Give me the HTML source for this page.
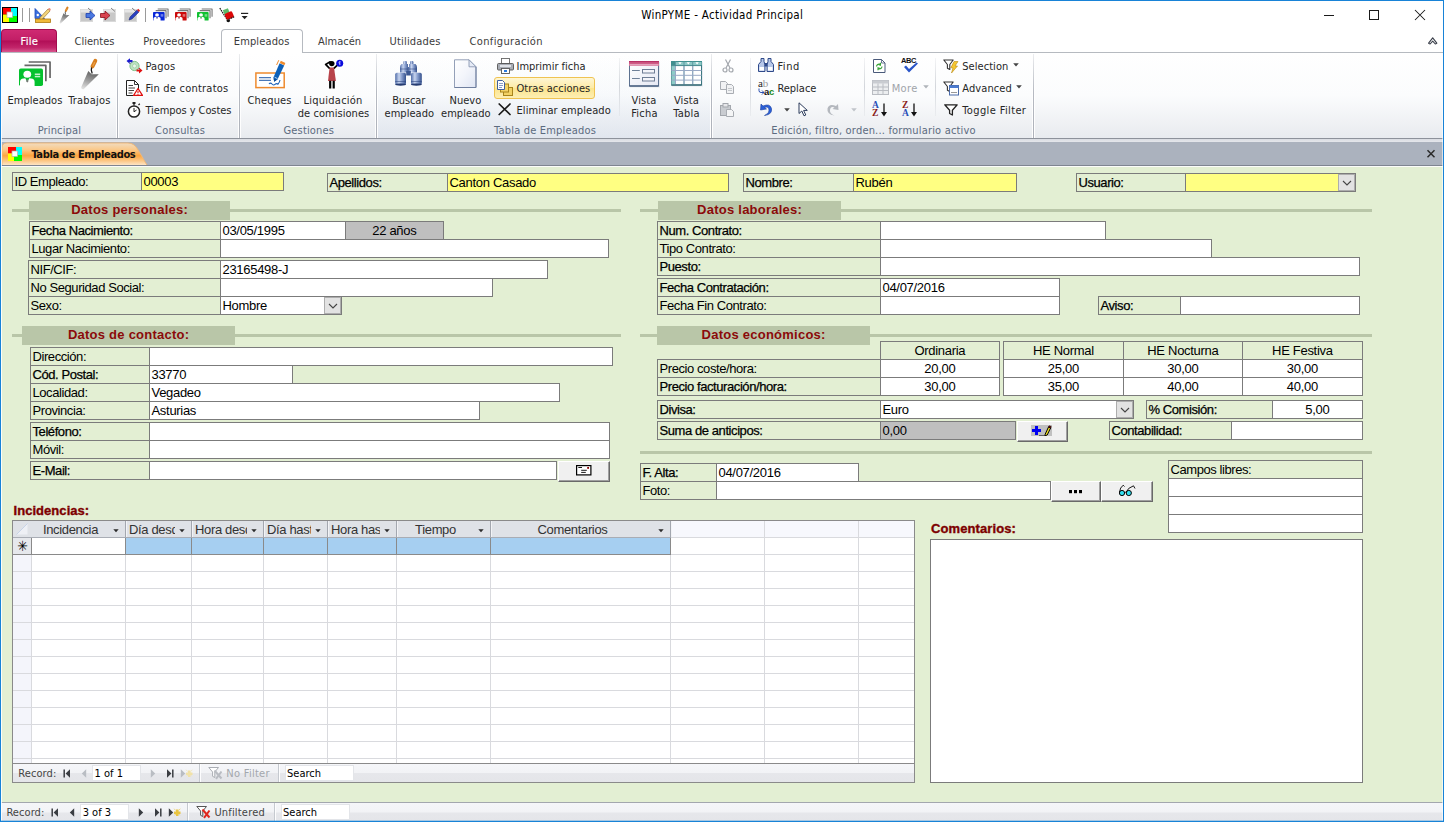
<!DOCTYPE html>
<html lang="es"><head><meta charset="utf-8"><title>WinPYME - Actividad Principal</title>
<style>
html,body{margin:0;padding:0;}
body{width:1444px;height:822px;overflow:hidden;background:#fff;position:relative;font-family:"Liberation Sans", Arial, sans-serif;}
.b{position:absolute;box-sizing:border-box;overflow:hidden;}
.t{position:absolute;white-space:nowrap;}
.a{font-family:"Liberation Sans", Arial, sans-serif;}
.u{font-family:"DejaVu Sans Condensed", "DejaVu Sans", "Liberation Sans", sans-serif;}
</style></head>
<body>
<div class="b" style="left:0px;top:0px;width:1444px;height:30px;background:#ffffff;"></div>
<div class="t u" style="top:6.00px;line-height:18px;font-size:11.5px;color:#000;letter-spacing:0.317px;left:422.16px;width:600px;text-align:center;">WinPYME - Actividad Principal</div>
<svg class="b" style="left:1320px;top:5px;" width="120" height="20" viewBox="0 0 120 20"><path d="M4 10.5H14" stroke="#1a1a1a" stroke-width="1" fill="none"/><rect x="49.5" y="5.5" width="9" height="9" stroke="#1a1a1a" stroke-width="1" fill="none"/><path d="M95 5L105 15M105 5L95 15" stroke="#1a1a1a" stroke-width="1.05" fill="none"/></svg>
<div class="b" style="left:0px;top:30px;width:1444px;height:23px;background:#ffffff;"></div>
<div class="b" style="left:0px;top:52px;width:1444px;height:1px;background:#b6bac0;"></div>
<div class="b" style="left:1px;top:29px;width:56px;height:23px;background:linear-gradient(#cf2a72 0%,#c21e66 45%,#b20e57 50%,#c2256a 80%,#d9578f 100%);border:1px solid #a20c4e;border-bottom:none;border-radius:4px 4px 0 0;"></div>
<div class="t u" style="top:33.00px;line-height:17px;font-size:11px;color:#fff;letter-spacing:0.254px;left:-270.67px;width:600px;text-align:center;-webkit-text-stroke:0.2px #fff;">File</div>
<div class="t u" style="top:33.00px;line-height:17px;font-size:11px;color:#3b3b3b;letter-spacing:0.012px;left:-205.49px;width:600px;text-align:center;">Clientes</div>
<div class="t u" style="top:33.00px;line-height:17px;font-size:11px;color:#3b3b3b;letter-spacing:0.126px;left:-125.64px;width:600px;text-align:center;">Proveedores</div>
<div class="t u" style="top:33.00px;line-height:17px;font-size:11px;color:#3b3b3b;letter-spacing:-0.004px;left:39.50px;width:600px;text-align:center;">Almacén</div>
<div class="t u" style="top:33.00px;line-height:17px;font-size:11px;color:#3b3b3b;letter-spacing:0.173px;left:115.09px;width:600px;text-align:center;">Utilidades</div>
<div class="t u" style="top:33.00px;line-height:17px;font-size:11px;color:#3b3b3b;letter-spacing:0.37px;left:206.19px;width:600px;text-align:center;">Configuración</div>
<div class="b" style="left:221px;top:29px;width:82px;height:25px;background:#ffffff;border:1px solid #b6bac0;border-bottom:none;border-radius:4px 4px 0 0;"></div>
<div class="t u" style="top:33.00px;line-height:17px;font-size:11px;color:#3b3b3b;letter-spacing:0.125px;left:-38.34px;width:600px;text-align:center;">Empleados</div>
<svg class="b" style="left:1426px;top:35px;" width="14" height="12" viewBox="0 0 14 12"><path d="M2.6 8.2L6.7 2.8L10.8 8.2L9.3 9L6.7 6.2L4.1 9Z" stroke="#3a3f4a" stroke-width="1.1" fill="#fff" stroke-linejoin="round"/></svg>
<div class="b" style="left:0px;top:53px;width:1444px;height:85px;background:linear-gradient(#ffffff 0%,#fbfcfd 50%,#eef0f3 85%,#e8ebef 100%);"></div>
<div class="b" style="left:0px;top:138px;width:1444px;height:1px;background:#8d929b;"></div>
<div class="b" style="left:0px;top:139px;width:1444px;height:3px;background:linear-gradient(#d9dce2,#e4e6eb);"></div>
<div class="b" style="left:378px;top:54px;width:332px;height:84px;background:linear-gradient(rgba(215,226,240,0) 0%,rgba(215,226,240,0.08) 40%,rgba(208,219,236,0.3) 100%);"></div>
<div class="b" style="left:116px;top:54px;width:1px;height:84px;background:linear-gradient(rgba(255,255,255,0.3),rgba(255,255,255,0.95) 50%);"></div>
<div class="b" style="left:117px;top:54px;width:1px;height:84px;background:linear-gradient(rgba(180,185,193,0.25),#b6bac2 45%,#adb1b9 100%);"></div>
<div class="b" style="left:118px;top:54px;width:1px;height:84px;background:linear-gradient(rgba(255,255,255,0.3),rgba(255,255,255,0.95) 50%);"></div>
<div class="b" style="left:238px;top:54px;width:1px;height:84px;background:linear-gradient(rgba(255,255,255,0.3),rgba(255,255,255,0.95) 50%);"></div>
<div class="b" style="left:239px;top:54px;width:1px;height:84px;background:linear-gradient(rgba(180,185,193,0.25),#b6bac2 45%,#adb1b9 100%);"></div>
<div class="b" style="left:240px;top:54px;width:1px;height:84px;background:linear-gradient(rgba(255,255,255,0.3),rgba(255,255,255,0.95) 50%);"></div>
<div class="b" style="left:375px;top:54px;width:1px;height:84px;background:linear-gradient(rgba(255,255,255,0.3),rgba(255,255,255,0.95) 50%);"></div>
<div class="b" style="left:376px;top:54px;width:1px;height:84px;background:linear-gradient(rgba(180,185,193,0.25),#b6bac2 45%,#adb1b9 100%);"></div>
<div class="b" style="left:377px;top:54px;width:1px;height:84px;background:linear-gradient(rgba(255,255,255,0.3),rgba(255,255,255,0.95) 50%);"></div>
<div class="b" style="left:710px;top:54px;width:1px;height:84px;background:linear-gradient(rgba(255,255,255,0.3),rgba(255,255,255,0.95) 50%);"></div>
<div class="b" style="left:711px;top:54px;width:1px;height:84px;background:linear-gradient(rgba(180,185,193,0.25),#b6bac2 45%,#adb1b9 100%);"></div>
<div class="b" style="left:712px;top:54px;width:1px;height:84px;background:linear-gradient(rgba(255,255,255,0.3),rgba(255,255,255,0.95) 50%);"></div>
<div class="b" style="left:1032px;top:54px;width:1px;height:84px;background:linear-gradient(rgba(255,255,255,0.3),rgba(255,255,255,0.95) 50%);"></div>
<div class="b" style="left:1033px;top:54px;width:1px;height:84px;background:linear-gradient(rgba(180,185,193,0.25),#b6bac2 45%,#adb1b9 100%);"></div>
<div class="b" style="left:1034px;top:54px;width:1px;height:84px;background:linear-gradient(rgba(255,255,255,0.3),rgba(255,255,255,0.95) 50%);"></div>
<div class="b" style="left:619px;top:58px;width:1px;height:58px;background:linear-gradient(rgba(200,204,210,0.2),#d3d6db 50%,rgba(200,204,210,0.2));"></div>
<div class="b" style="left:750px;top:58px;width:1px;height:58px;background:linear-gradient(rgba(200,204,210,0.2),#d3d6db 50%,rgba(200,204,210,0.2));"></div>
<div class="b" style="left:864px;top:58px;width:1px;height:58px;background:linear-gradient(rgba(200,204,210,0.2),#d3d6db 50%,rgba(200,204,210,0.2));"></div>
<div class="b" style="left:935px;top:58px;width:1px;height:58px;background:linear-gradient(rgba(200,204,210,0.2),#d3d6db 50%,rgba(200,204,210,0.2));"></div>
<div class="t u" style="top:122.00px;line-height:17px;font-size:11px;color:#5c6b80;letter-spacing:0.149px;left:-240.63px;width:600px;text-align:center;">Principal</div>
<div class="t u" style="top:122.00px;line-height:17px;font-size:11px;color:#5c6b80;letter-spacing:0.163px;left:-119.92px;width:600px;text-align:center;">Consultas</div>
<div class="t u" style="top:122.00px;line-height:17px;font-size:11px;color:#5c6b80;letter-spacing:0.153px;left:8.78px;width:600px;text-align:center;">Gestiones</div>
<div class="t u" style="top:122.00px;line-height:17px;font-size:11px;color:#5c6b80;letter-spacing:0.188px;left:245.09px;width:600px;text-align:center;">Tabla de Empleados</div>
<div class="t u" style="top:122.00px;line-height:17px;font-size:11px;color:#5c6b80;letter-spacing:0.187px;left:573.59px;width:600px;text-align:center;">Edición, filtro, orden... formulario activo</div>
<div class="t u" style="top:92.00px;line-height:17px;font-size:11px;color:#262626;letter-spacing:0.025px;left:-265.09px;width:600px;text-align:center;">Empleados</div>
<div class="t u" style="top:92.00px;line-height:17px;font-size:11px;color:#262626;letter-spacing:0.191px;left:-210.60px;width:600px;text-align:center;">Trabajos</div>
<div class="t u" style="top:58.00px;line-height:17px;font-size:11px;color:#262626;letter-spacing:0.194px;left:145.4px;">Pagos</div>
<div class="t u" style="top:80.00px;line-height:17px;font-size:11px;color:#262626;letter-spacing:0.222px;left:145.4px;">Fin de contratos</div>
<div class="t u" style="top:102.00px;line-height:17px;font-size:11px;color:#262626;letter-spacing:-0.067px;left:145.4px;">Tiempos y Costes</div>
<div class="t u" style="top:92.00px;line-height:17px;font-size:11px;color:#262626;letter-spacing:0.129px;left:-30.44px;width:600px;text-align:center;">Cheques</div>
<div class="t u" style="top:92.00px;line-height:17px;font-size:11px;color:#262626;letter-spacing:0.233px;left:33.12px;width:600px;text-align:center;">Liquidación</div>
<div class="t u" style="top:105.00px;line-height:17px;font-size:11px;color:#262626;letter-spacing:0.047px;left:33.52px;width:600px;text-align:center;">de comisiones</div>
<div class="t u" style="top:92.00px;line-height:17px;font-size:11px;color:#262626;letter-spacing:-0.133px;left:108.63px;width:600px;text-align:center;">Buscar</div>
<div class="t u" style="top:105.00px;line-height:17px;font-size:11px;color:#262626;letter-spacing:0.029px;left:109.31px;width:600px;text-align:center;">empleado</div>
<div class="t u" style="top:92.00px;line-height:17px;font-size:11px;color:#262626;letter-spacing:0.062px;left:165.43px;width:600px;text-align:center;">Nuevo</div>
<div class="t u" style="top:105.00px;line-height:17px;font-size:11px;color:#262626;letter-spacing:0.029px;left:165.81px;width:600px;text-align:center;">empleado</div>
<div class="b" style="left:494px;top:77px;width:101px;height:22px;background:linear-gradient(#fef6d4,#fdeba6 50%,#fce48c 51%,#fdefb4);border:1px solid #efc352;border-radius:3px;"></div>
<div class="t u" style="top:58.00px;line-height:17px;font-size:11px;color:#262626;letter-spacing:-0.02px;left:516.5px;">Imprimir ficha</div>
<div class="t u" style="top:80.00px;line-height:17px;font-size:11px;color:#262626;letter-spacing:0.023px;left:516.5px;">Otras acciones</div>
<div class="t u" style="top:102.00px;line-height:17px;font-size:11px;color:#262626;letter-spacing:0.079px;left:516.5px;">Eliminar empleado</div>
<div class="t u" style="top:92.00px;line-height:17px;font-size:11px;color:#262626;letter-spacing:0.125px;left:344.06px;width:600px;text-align:center;">Vista</div>
<div class="t u" style="top:105.00px;line-height:17px;font-size:11px;color:#262626;letter-spacing:0.236px;left:344.52px;width:600px;text-align:center;">Ficha</div>
<div class="t u" style="top:92.00px;line-height:17px;font-size:11px;color:#262626;letter-spacing:0.125px;left:386.46px;width:600px;text-align:center;">Vista</div>
<div class="t u" style="top:105.00px;line-height:17px;font-size:11px;color:#262626;letter-spacing:0.262px;left:386.53px;width:600px;text-align:center;">Tabla</div>
<div class="t u" style="top:58.00px;line-height:17px;font-size:11px;color:#262626;letter-spacing:0.549px;left:777.4px;">Find</div>
<div class="t u" style="top:80.00px;line-height:17px;font-size:11px;color:#262626;letter-spacing:-0.016px;left:777.4px;">Replace</div>
<div class="t u" style="top:80.00px;line-height:17px;font-size:11px;color:#a0a4aa;letter-spacing:0.371px;left:891.7px;">More</div>
<div class="t u" style="top:58.00px;line-height:17px;font-size:11px;color:#262626;letter-spacing:0.042px;left:962.3px;">Selection</div>
<div class="t u" style="top:80.00px;line-height:17px;font-size:11px;color:#262626;letter-spacing:0.078px;left:962.3px;">Advanced</div>
<div class="t u" style="top:102.00px;line-height:17px;font-size:11px;color:#262626;letter-spacing:0.368px;left:962.3px;">Toggle Filter</div>
<svg class="b" style="left:1012.5px;top:63.3px;" width="6" height="4" viewBox="0 0 6 4"><path d="M0.2 0.3H5.8L3 3.6Z" fill="#444"/></svg>
<svg class="b" style="left:1016px;top:85.3px;" width="6" height="4" viewBox="0 0 6 4"><path d="M0.2 0.3H5.8L3 3.6Z" fill="#444"/></svg>
<svg class="b" style="left:923px;top:85.3px;" width="6" height="4" viewBox="0 0 6 4"><path d="M0.2 0.3H5.8L3 3.6Z" fill="#b0b4ba"/></svg>
<svg class="b" style="left:784px;top:107.6px;" width="6" height="4" viewBox="0 0 6 4"><path d="M0.2 0.3H5.8L3 3.6Z" fill="#444"/></svg>
<svg class="b" style="left:851px;top:107.6px;" width="6" height="4" viewBox="0 0 6 4"><path d="M0.2 0.3H5.8L3 3.6Z" fill="#c0c4ca"/></svg>
<svg class="b" style="left:2px;top:7px;" width="16" height="16" viewBox="0 0 16 16"><rect x="0" y="0" width="16" height="16" fill="#000"/><rect x="1.00" y="1.00" width="8.00" height="6.50" fill="#f00" /><rect x="9.00" y="1.00" width="6.00" height="8.00" fill="#0ff" /><rect x="7.00" y="9.00" width="8.00" height="6.00" fill="#0f0" /><rect x="1.00" y="7.50" width="6.00" height="7.50" fill="#ff0" /><rect x="5.00" y="5.00" width="5.50" height="5.50" fill="#fff" stroke="#b0b0b0" stroke-width="0.7"/></svg>
<div class="b" style="left:22px;top:8px;width:1px;height:14px;background:#9a9a9a;"></div>
<div class="b" style="left:29px;top:8px;width:1px;height:14px;background:#9a9a9a;"></div>
<div class="b" style="left:145px;top:8px;width:1px;height:14px;background:#9a9a9a;"></div>
<svg class="b" style="left:34px;top:7px;" width="17" height="16" viewBox="0 0 17 16"><path d="M1 1.5V11.5H10.5Z" fill="#3a6fe0" stroke="#1b48b8" stroke-width="0.8"/><circle cx="3.8" cy="8" r="1.2" fill="#fff"/><path d="M6 10.5L14 2L16 4L8 12.5L5.5 13Z" fill="#f2d37a" stroke="#8a6a20" stroke-width="0.6"/><path d="M14 2L15 1Q16.5 0.8 16.8 2.8L16 4Z" fill="#e98b7a"/><rect x="1.5" y="12" width="15" height="3.5" fill="#f0b93a" stroke="#b07a10" stroke-width="0.8"/></svg>
<svg class="b" style="left:59px;top:6px;" width="11" height="18" viewBox="0 0 20 32"><defs><linearGradient id="tw56" x1="0.6" y1="0" x2="0.3" y2="1"><stop offset="0" stop-color="#5e5e5e"/><stop offset="0.5" stop-color="#9a9a9a"/><stop offset="1" stop-color="#dedede"/></linearGradient></defs><path d="M15.3 2.8L12.5 8.4" stroke="#d9801f" stroke-width="3.9" stroke-linecap="round"/><path d="M14.6 4.5L13 7.5" stroke="#e9a04a" stroke-width="1.2" stroke-linecap="round"/><path d="M11.6 9.5Q10.6 12 12.2 15.5" stroke="#1a1a1a" stroke-width="1.3" fill="none"/><path d="M8.3 13L11.6 16.2L12.8 16.3L18.8 16.2L3.6 31.2Q1.2 31.6 1.2 29.2Z" fill="url(#tw56)"/></svg>
<svg class="b" style="left:80px;top:7px;" width="16" height="16" viewBox="0 0 16 16"><rect x="0.5" y="2.5" width="12" height="12" fill="#c8c8c8" stroke="#d9d9d9"/><rect x="0.5" y="2.5" width="12" height="3" fill="#e6e6e6"/><path d="M8 1L12 4.5" stroke="#666" stroke-width="0.8"/><path d="M6 6.5H10V4L15 8.5L10 13V10.5H6Z" fill="#4a78e0" stroke="#1d3fae" stroke-width="0.8"/></svg>
<svg class="b" style="left:100px;top:7px;" width="16" height="16" viewBox="0 0 16 16"><rect x="3.5" y="2.5" width="12" height="12" fill="#c8c8c8" stroke="#d9d9d9"/><rect x="3.5" y="2.5" width="12" height="3" fill="#e6e6e6"/><path d="M11 1L15 4.5" stroke="#666" stroke-width="0.8"/><path d="M0.5 6.5H5V4L10 8.5L5 13V10.5H0.5Z" fill="#d9434f" stroke="#8a0f1a" stroke-width="0.8"/></svg>
<svg class="b" style="left:124px;top:7px;" width="16" height="16" viewBox="0 0 16 16"><rect x="0.5" y="2.5" width="12" height="12" fill="#c8c8c8" stroke="#d9d9d9"/><rect x="0.5" y="2.5" width="12" height="3" fill="#e6e6e6"/><path d="M8 1L12 4.5" stroke="#666" stroke-width="0.8"/><path d="M5 13L6 10L13 3L15 5L8 12Z" fill="#2a3fc0" stroke="#1a2470" stroke-width="0.5"/><path d="M13 3L14.2 1.8L16 3.6L15 5Z" fill="#e02020"/></svg>
<svg class="b" style="left:153px;top:8px;" width="16" height="14" viewBox="0 0 33 27"><path d="M9.7 1.0H31.05V17" fill="none" stroke="#777" stroke-width="2.3" stroke-linejoin="round"/><path d="M5.5 4.4H26.85V20.2" fill="none" stroke="#777" stroke-width="2.3" stroke-linejoin="round"/><rect x="0" y="7.5" width="24" height="17.6" rx="1.8" fill="#0a28d8"/><ellipse cx="8.3" cy="13.3" rx="3.9" ry="3.5" fill="#fff"/><path d="M1 26.3V20.8Q1 17.8 4.5 17.4L6.3 17.2L8.3 21.3L10.3 17.2L12.1 17.4Q15.6 17.8 15.6 20.8V26.3Z" fill="#fff"/><path d="M7.6 18.5H9L9.4 20.4L8.3 21.6L7.2 20.4Z" fill="#777"/><rect x="15.8" y="12.5" width="5.4" height="1.5" fill="#fff" opacity="0.75"/><rect x="15.8" y="14.8" width="5.4" height="1.5" fill="#fff" opacity="0.75"/></svg>
<svg class="b" style="left:175px;top:8px;" width="16" height="14" viewBox="0 0 33 27"><path d="M9.7 1.0H31.05V17" fill="none" stroke="#777" stroke-width="2.3" stroke-linejoin="round"/><path d="M5.5 4.4H26.85V20.2" fill="none" stroke="#777" stroke-width="2.3" stroke-linejoin="round"/><rect x="0" y="7.5" width="24" height="17.6" rx="1.8" fill="#cc0a0a"/><ellipse cx="8.3" cy="13.3" rx="3.9" ry="3.5" fill="#fff"/><path d="M1 26.3V20.8Q1 17.8 4.5 17.4L6.3 17.2L8.3 21.3L10.3 17.2L12.1 17.4Q15.6 17.8 15.6 20.8V26.3Z" fill="#fff"/><path d="M7.6 18.5H9L9.4 20.4L8.3 21.6L7.2 20.4Z" fill="#777"/><rect x="15.8" y="12.5" width="5.4" height="1.5" fill="#fff" opacity="0.75"/><rect x="15.8" y="14.8" width="5.4" height="1.5" fill="#fff" opacity="0.75"/></svg>
<svg class="b" style="left:197px;top:8px;" width="16" height="14" viewBox="0 0 33 27"><path d="M9.7 1.0H31.05V17" fill="none" stroke="#777" stroke-width="2.3" stroke-linejoin="round"/><path d="M5.5 4.4H26.85V20.2" fill="none" stroke="#777" stroke-width="2.3" stroke-linejoin="round"/><rect x="0" y="7.5" width="24" height="17.6" rx="1.8" fill="#10c030"/><ellipse cx="8.3" cy="13.3" rx="3.9" ry="3.5" fill="#fff"/><path d="M1 26.3V20.8Q1 17.8 4.5 17.4L6.3 17.2L8.3 21.3L10.3 17.2L12.1 17.4Q15.6 17.8 15.6 20.8V26.3Z" fill="#fff"/><path d="M7.6 18.5H9L9.4 20.4L8.3 21.6L7.2 20.4Z" fill="#777"/><rect x="15.8" y="12.5" width="5.4" height="1.5" fill="#fff" opacity="0.75"/><rect x="15.8" y="14.8" width="5.4" height="1.5" fill="#fff" opacity="0.75"/></svg>
<svg class="b" style="left:219px;top:7px;" width="17" height="16" viewBox="0 0 17 16"><path d="M0.8 1.2L8.8 13.5" stroke="#111" stroke-width="1.2" fill="none" stroke-dasharray="1.6 0.7"/><rect x="4.5" y="2.2" width="5.5" height="4.5" fill="#5cba6a" transform="rotate(-22 7 4.5)"/><rect x="6.3" y="5.3" width="8" height="6.6" rx="1.5" fill="#dc0808" transform="rotate(-24 10 8.5)"/><ellipse cx="9.3" cy="13.8" rx="1.8" ry="1.4" fill="#111"/><path d="M9.5 12.6L15.8 9.4" stroke="#111" stroke-width="1.1" stroke-dasharray="1.6 0.8"/></svg>
<svg class="b" style="left:241px;top:12px;" width="8" height="8" viewBox="0 0 8 8"><path d="M0 1.4H7.2" stroke="#222" stroke-width="1.2"/><path d="M0.6 4H6.6L3.6 7.2Z" fill="#222"/></svg>
<svg class="b" style="left:19px;top:60.5px;" width="33" height="27" viewBox="0 0 33 27"><path d="M9.7 1.0H31.05V17" fill="none" stroke="#666" stroke-width="1.7" stroke-linejoin="round"/><path d="M5.5 4.4H26.85V20.2" fill="none" stroke="#666" stroke-width="1.7" stroke-linejoin="round"/><rect x="0" y="7.5" width="24" height="17.6" rx="1.8" fill="#04c12e"/><ellipse cx="8.3" cy="13.3" rx="3.9" ry="3.5" fill="#fff"/><path d="M1 26.3V20.8Q1 17.8 4.5 17.4L6.3 17.2L8.3 21.3L10.3 17.2L12.1 17.4Q15.6 17.8 15.6 20.8V26.3Z" fill="#fff"/><path d="M7.6 18.5H9L9.4 20.4L8.3 21.6L7.2 20.4Z" fill="#777"/><rect x="15.8" y="12.5" width="5.4" height="1.5" fill="#fff" opacity="0.75"/><rect x="15.8" y="14.8" width="5.4" height="1.5" fill="#fff" opacity="0.75"/></svg>
<svg class="b" style="left:80px;top:58px;" width="20" height="32" viewBox="0 0 20 32"><defs><linearGradient id="tw100" x1="0.6" y1="0" x2="0.3" y2="1"><stop offset="0" stop-color="#5e5e5e"/><stop offset="0.5" stop-color="#9a9a9a"/><stop offset="1" stop-color="#dedede"/></linearGradient></defs><path d="M15.3 2.8L12.5 8.4" stroke="#d9801f" stroke-width="3.9" stroke-linecap="round"/><path d="M14.6 4.5L13 7.5" stroke="#e9a04a" stroke-width="1.2" stroke-linecap="round"/><path d="M11.6 9.5Q10.6 12 12.2 15.5" stroke="#1a1a1a" stroke-width="1.3" fill="none"/><path d="M8.3 13L11.6 16.2L12.8 16.3L18.8 16.2L3.6 31.2Q1.2 31.6 1.2 29.2Z" fill="url(#tw100)"/></svg>
<svg class="b" style="left:126px;top:58px;" width="17" height="16" viewBox="0 0 17 16"><circle cx="8.5" cy="8" r="4.6" fill="#bfe3c2" stroke="#7fc089" stroke-width="1"/><circle cx="8.5" cy="8" r="2" fill="#e8f5e9" stroke="#8fc898" stroke-width="0.6"/><path d="M0.5 3L4 0.2V2H6.5V4.2H4V6Z" fill="#1a1ad0"/><path d="M16.5 12.5L13 15.5V13.6H10.5V11.4H13V9.6Z" fill="#e01010"/><path d="M3 4L5 6M14 12L12 10" stroke="#888" stroke-width="0.8"/></svg>
<svg class="b" style="left:126px;top:80px;" width="17" height="16" viewBox="0 0 17 16"><path d="M0.5 0.5H8.5L12.5 4.5V15.5H0.5Z" fill="#fff" stroke="#222" stroke-width="1"/><path d="M8.5 0.5V4.5H12.5" fill="none" stroke="#222" stroke-width="0.9"/><path d="M2.5 5.5H7M2.5 8H9M2.5 10.5H8M2.5 13H6.5" stroke="#444" stroke-width="1"/><path d="M12 8.5L16.5 15.5H7.5Z" fill="#fff" stroke="#e01010" stroke-width="1.3" stroke-linejoin="round"/><path d="M12 11V13.2M12 14V14.8" stroke="#e01010" stroke-width="1.1"/></svg>
<svg class="b" style="left:127px;top:102px;" width="15" height="16" viewBox="0 0 15 16"><rect x="5.5" y="0" width="3" height="2" fill="#222"/><path d="M7 2V3.5M11.5 3L12.8 1.8" stroke="#222" stroke-width="1.3"/><circle cx="7" cy="9.5" r="5.6" fill="#fff" stroke="#222" stroke-width="1.5"/><path d="M7 6V9.8L9.6 8" stroke="#222" stroke-width="1" fill="none"/></svg>
<svg class="b" style="left:254px;top:59px;" width="33" height="30" viewBox="0 0 33 30"><rect x="1.9" y="14" width="28.3" height="14.6" fill="#fff" stroke="#ee8a2e" stroke-width="1.5"/><path d="M5 18.6H17M5 21.4H17" stroke="#4a78b8" stroke-width="1.3"/><path d="M15 25Q16.5 23.2 18 25T21 25.4T24 25.2Q25.6 23.5 26 21" stroke="#1f62b8" stroke-width="1.1" fill="none"/><path d="M25.6 4.2L30.2 6.4L23.6 20.3L20.2 22.8L19.4 18.4Z" fill="#0c60b8"/><path d="M19.6 19.5L20.2 22.8L23 20.8Z" fill="#0a4a98"/><path d="M20.6 18.2L23.4 19.6" stroke="#fff" stroke-width="0.7"/><path d="M26.8 1.8L31.4 4L30.4 6.2L25.8 4Z" fill="#f08a2a"/><path d="M24.8 1.2L22.6 6" stroke="#f08a2a" stroke-width="1"/></svg>
<svg class="b" style="left:323px;top:59px;" width="22" height="30" viewBox="0 0 22 30"><circle cx="8.8" cy="4.6" r="2.7" fill="#000"/><path d="M6.3 9.2L2.6 5.4L7.2 2.8" stroke="#000" stroke-width="1.7" fill="none" stroke-linejoin="round" stroke-linecap="round"/><path d="M11.2 9.2L14.6 5.8" stroke="#000" stroke-width="1.7" stroke-linecap="round"/><path d="M6.6 8.4H11L12.9 21.9H5Z" fill="#b8434a"/><path d="M7.2 21.8V29.4M10.7 21.8V29.4" stroke="#000" stroke-width="2.2"/><circle cx="16.7" cy="4.2" r="3.5" fill="#0a0adc"/><path d="M16.7 2.2V6.2M17.7 2.9Q16 2.4 15.9 3.6T17.6 5.2" stroke="#c8ccff" stroke-width="0.7" fill="none"/></svg>
<svg class="b" style="left:394px;top:60px;" width="30" height="26" viewBox="0 0 30 26"><defs><linearGradient id="bn" x1="0" y1="0" x2="1" y2="0"><stop offset="0" stop-color="#4f6ca8"/><stop offset="0.35" stop-color="#c6d3ee"/><stop offset="0.6" stop-color="#8aa0cf"/><stop offset="1" stop-color="#34508c"/></linearGradient></defs><rect x="9.4" y="1" width="3.4" height="3.4" rx="1" fill="url(#bn)"/><rect x="16" y="1" width="3.4" height="3.4" rx="1" fill="url(#bn)"/><path d="M7.5 4H14V7H14.8V12.5H6V7.5Q6 5 7.5 4Z" fill="url(#bn)"/><path d="M15 4H21.5Q23 5 23 7.5V12.5H14.5V7H15Z" fill="url(#bn)"/><rect x="12.2" y="11" width="4.6" height="4.5" fill="#3d5892"/><rect x="1.2" y="12.8" width="10.8" height="11.8" rx="1.6" fill="url(#bn)"/><rect x="17" y="12.8" width="10.8" height="11.8" rx="1.6" fill="url(#bn)"/><path d="M1.2 21.5H12M17 21.5H27.8M6 9H14.5M15 9H23" stroke="#2c4580" stroke-width="0.8" opacity="0.7"/><ellipse cx="6.6" cy="24.6" rx="5.4" ry="1.1" fill="#263c72"/><ellipse cx="22.4" cy="24.6" rx="5.4" ry="1.1" fill="#263c72"/></svg>
<svg class="b" style="left:454px;top:59px;" width="23" height="30" viewBox="0 0 23 30"><defs><linearGradient id="pg" x1="0" y1="0" x2="1" y2="1"><stop offset="0" stop-color="#ffffff"/><stop offset="0.5" stop-color="#f3f5fb"/><stop offset="1" stop-color="#dfe5f3"/></linearGradient></defs><path d="M0.5 0.8H15L22 7.8V28.5H0.5Z" fill="url(#pg)" stroke="#94a0b8" stroke-width="1"/><path d="M15 0.8V7.8H22Z" fill="#e6ebf6" stroke="#8a97b2" stroke-width="0.9" stroke-linejoin="round"/><path d="M0.5 28.5H22V8" fill="none" stroke="#6f7f9f" stroke-width="1"/></svg>
<svg class="b" style="left:497px;top:58px;" width="17" height="16" viewBox="0 0 17 16"><rect x="4.5" y="0.5" width="8" height="5" fill="#fff" stroke="#666" stroke-width="0.9"/><rect x="0.5" y="5.5" width="16" height="6.5" rx="1" fill="#a9adb5" stroke="#555" stroke-width="0.9"/><rect x="3" y="7" width="11" height="2" fill="#dfe2e7"/><rect x="4.5" y="10.5" width="8" height="5" fill="#fff" stroke="#555" stroke-width="0.9"/><rect x="7" y="12" width="3" height="2" fill="#2a7be0"/></svg>
<svg class="b" style="left:497px;top:80px;" width="17" height="16" viewBox="0 0 17 16"><rect x="6.5" y="7.5" width="9" height="8" fill="#f3d264" stroke="#a8841c" stroke-width="1"/><rect x="3.5" y="4" width="8" height="8" fill="#f3d264" stroke="#a8841c" stroke-width="1"/><path d="M0.5 0.5H5.5L7.5 2.5V9.5H0.5Z" fill="#fff" stroke="#3f5f9f" stroke-width="1"/><path d="M2 3.5H6M2 5.5H6M2 7.5H5" stroke="#6a84b8" stroke-width="0.8"/></svg>
<svg class="b" style="left:498px;top:103px;" width="14" height="13" viewBox="0 0 14 13"><path d="M1.2 1L12 11.5M12 1L1.2 11.5" stroke="#1a1a1a" stroke-width="1.7" stroke-linecap="round"/></svg>
<svg class="b" style="left:628px;top:60px;" width="33" height="28" viewBox="0 0 33 28"><defs><linearGradient id="vf" x1="0" y1="0" x2="1" y2="1"><stop offset="0" stop-color="#ffffff"/><stop offset="1" stop-color="#e6e8f4"/></linearGradient></defs><rect x="2" y="2" width="30" height="25.5" fill="#dfe2ea" opacity="0.7"/><rect x="1.5" y="1.5" width="29" height="24.5" fill="url(#vf)" stroke="#5d7290" stroke-width="1"/><rect x="1" y="1" width="30" height="4.8" fill="#cf5c86"/><rect x="1" y="1" width="30" height="1.2" fill="#b83065"/><rect x="1.5" y="4" width="29" height="1.6" fill="#e3a3bb"/><path d="M4 10.5H11.8M4 18.5H11.8" stroke="#6f8098" stroke-width="1"/><rect x="14.5" y="9.5" width="12" height="3.5" fill="#f4f4fa" stroke="#6f7d95"/><rect x="14.5" y="17.5" width="12" height="3.5" fill="#f4f4fa" stroke="#6f7d95"/><path d="M1.5 26H30.5" stroke="#3f5678" stroke-width="1.2"/></svg>
<svg class="b" style="left:670px;top:60px;" width="34" height="28" viewBox="0 0 34 28"><rect x="2" y="2" width="31" height="24.5" fill="#dfe2ea" opacity="0.7"/><rect x="1.5" y="1.5" width="30" height="23.5" fill="#fff" stroke="#3a7780" stroke-width="1"/><rect x="1" y="1" width="31" height="4.6" fill="#3f8f8f"/><rect x="5.5" y="2" width="26" height="3" fill="#8cc8c6"/><rect x="1.5" y="5.5" width="4" height="19.5" fill="#8ecbc8"/><path d="M5.5 1.5V25M14 1.5V25M22.7 1.5V25" stroke="#5f9aa2" stroke-width="1"/><path d="M5.5 5.6V25M14 5.6V25M22.7 5.6V25M1.5 10.5H31.5M1.5 15.3H31.5M1.5 20.1H31.5" stroke="#9aa9c6" stroke-width="1"/><path d="M8.3 2.3H11.7L10 4.6Z M16.6 2.3H20L18.3 4.6Z M25.4 2.3H28.8L27.1 4.6Z" fill="#fff"/><path d="M1.5 5.6H31.5" stroke="#3a7f84" stroke-width="0.8"/><path d="M1.5 25H31.5" stroke="#2f6470" stroke-width="1.2"/></svg>
<svg class="b" style="left:722px;top:59px;" width="12" height="14" viewBox="0 0 12 14"><path d="M3.5 0.5L8 9M8.5 0.5L4 9" stroke="#a3a7ad" stroke-width="1.2" fill="none"/><circle cx="3" cy="11" r="2" fill="none" stroke="#a3a7ad" stroke-width="1.2"/><circle cx="9" cy="11" r="2" fill="none" stroke="#a3a7ad" stroke-width="1.2"/></svg>
<svg class="b" style="left:720px;top:81px;" width="15" height="13" viewBox="0 0 15 13"><path d="M0.5 0.5H5.5L7.5 2.5V8.5H0.5Z" fill="#f1f2f4" stroke="#a9adb3"/><path d="M6.5 3.5H11.5L13.5 5.5V12.5H6.5Z" fill="#f1f2f4" stroke="#a9adb3"/><path d="M8 7.5H12M8 9.5H12" stroke="#b9bcc2" stroke-width="0.8"/></svg>
<svg class="b" style="left:720px;top:103px;" width="15" height="14" viewBox="0 0 15 14"><rect x="0.5" y="2.5" width="10" height="10" fill="#c9ccd1" stroke="#a3a7ad"/><rect x="3" y="0.5" width="5" height="3.5" fill="#e6e7ea" stroke="#a3a7ad"/><path d="M6.5 6.5H11.5L13.5 8.5V13.5H6.5Z" fill="#f4f5f6" stroke="#a9adb3"/></svg>
<svg class="b" style="left:758px;top:58px;" width="16" height="14" viewBox="0 0 16 14"><path d="M3 0.5H6V3.5L7 6.5V13.5H0.5V6.5L3 3.5Z" fill="#b7c7e8" stroke="#2f4a8a" stroke-width="1"/><path d="M10 0.5H13V3.5L15.5 6.5V13.5H9V6.5L10 3.5Z" fill="#b7c7e8" stroke="#2f4a8a" stroke-width="1"/><rect x="6.5" y="5" width="3" height="3.5" fill="#2f4a8a"/><rect x="1.5" y="9" width="4.5" height="3.5" fill="#fff"/><rect x="10" y="9" width="4.5" height="3.5" fill="#fff"/></svg>
<div class="t" style="left:758px;top:79px;font-family:'Liberation Serif',serif;font-size:11px;line-height:9px;color:#222;letter-spacing:-0.2px;">a<span style="color:#9a9a9a">b</span></div>
<div class="t a" style="left:764px;top:87px;font-size:9.5px;line-height:9px;color:#111;font-weight:bold;letter-spacing:-0.3px;">a<span style="color:#1a8a1a">c</span></div>
<svg class="b" style="left:758px;top:88px;" width="7" height="7" viewBox="0 0 7 7"><path d="M1 0.5V2.5Q1 4.5 3 4.5H6M4 2.5L6 4.5L4 6.5" stroke="#2a4fb0" stroke-width="1" fill="none"/></svg>
<svg class="b" style="left:759px;top:103px;" width="14" height="14" viewBox="0 0 14 14"><path d="M2 1L1.5 7L7.5 6L5.5 4.5Q9.5 3 10 7Q10.5 10.5 5.5 12.5Q13.5 11.5 12.5 5.5Q11 0 4 3Z" fill="#2a5fd8" stroke="#1b3fa0" stroke-width="0.6"/></svg>
<svg class="b" style="left:798px;top:102px;" width="11" height="15" viewBox="0 0 11 15"><path d="M1 0.8V11.5L3.8 9L6 13.8L7.8 13L5.6 8.4H9.3Z" fill="#fff" stroke="#2a3a5a" stroke-width="1" stroke-linejoin="round"/></svg>
<svg class="b" style="left:826px;top:103px;" width="14" height="14" viewBox="0 0 14 14"><path d="M12 1L12.5 7L6.5 6L8.5 4.5Q4.5 3 4 7Q3.5 10.5 8.5 12.5Q0.5 11.5 1.5 5.5Q3 0 10 3Z" fill="#b4b8be"/></svg>
<svg class="b" style="left:873px;top:59px;" width="13" height="14" viewBox="0 0 13 14"><path d="M0.5 0.5H8.5L12 4V13.5H0.5Z" fill="#fff" stroke="#4a5a7a" stroke-width="1"/><path d="M8.5 0.5V4H12" fill="none" stroke="#4a5a7a" stroke-width="0.8"/><path d="M3.5 7.5Q4 4.5 7 5.2M7.5 3.8L7.4 6.2L5.4 5.5M9 7.5Q8.5 10.5 5.5 9.8M5 11.2L5.1 8.8L7.1 9.5" stroke="#3aa53a" stroke-width="1.2" fill="none"/></svg>
<div class="t a" style="left:901px;top:57px;font-size:7.5px;line-height:8px;color:#111;font-weight:bold;letter-spacing:-0.4px;">ABC</div>
<svg class="b" style="left:903px;top:62px;" width="16" height="11" viewBox="0 0 16 11"><path d="M1 5L3 3.5L6 7L13.5 0.5L15 1.5L6 10.5Z" fill="#2a55c8"/></svg>
<svg class="b" style="left:872px;top:80px;" width="17" height="15" viewBox="0 0 17 15"><rect x="0.5" y="0.5" width="16" height="14" fill="#eceef0" stroke="#b9bcc2"/><rect x="0.5" y="0.5" width="16" height="3" fill="#c9ccd1"/><path d="M0.5 7H16.5M0.5 10.5H16.5M6 3.5V14.5M11 3.5V14.5" stroke="#b9bcc2" stroke-width="1"/></svg>
<div class="t" style="left:872px;top:101px;font-family:'Liberation Serif',serif;font-size:9.5px;line-height:8px;font-weight:bold;color:#2a4fb8;">A</div>
<div class="t" style="left:872px;top:109px;font-family:'Liberation Serif',serif;font-size:9.5px;line-height:8px;font-weight:bold;color:#8a1a1a;">Z</div>
<svg class="b" style="left:880px;top:103px;" width="8" height="14" viewBox="0 0 8 14"><path d="M4 0.5V11" stroke="#111" stroke-width="1.3"/><path d="M1 9L4 13.5L7 9Z" fill="#111"/></svg>
<div class="t" style="left:902px;top:101px;font-family:'Liberation Serif',serif;font-size:9.5px;line-height:8px;font-weight:bold;color:#8a1a1a;">Z</div>
<div class="t" style="left:902px;top:109px;font-family:'Liberation Serif',serif;font-size:9.5px;line-height:8px;font-weight:bold;color:#2a4fb8;">A</div>
<svg class="b" style="left:910px;top:103px;" width="8" height="14" viewBox="0 0 8 14"><path d="M4 0.5V11" stroke="#111" stroke-width="1.3"/><path d="M1 9L4 13.5L7 9Z" fill="#111"/></svg>
<svg class="b" style="left:943px;top:59px;" width="16" height="15" viewBox="0 0 16 15"><path d="M0.8 1H10.2L6.8 5.5V10.5L4.4 9.2V5.5Z" fill="#fff" stroke="#333" stroke-width="1.1" stroke-linejoin="round"/><path d="M11 2.5H15L12 7H14.5L8.5 14L10 8.8H7.8Z" fill="#f6c731" stroke="#b88a12" stroke-width="0.6"/></svg>
<svg class="b" style="left:943px;top:81px;" width="16" height="15" viewBox="0 0 16 15"><path d="M0.8 1H10.2L6.8 5.5V10.5L4.4 9.2V5.5Z" fill="#fff" stroke="#333" stroke-width="1.1" stroke-linejoin="round"/><rect x="6.5" y="4.5" width="9" height="9.5" fill="#fff" stroke="#4a6aa8" stroke-width="1"/><rect x="6.5" y="4.5" width="9" height="2.5" fill="#4a7ad0"/><path d="M8.5 11.5H13.5" stroke="#333" stroke-width="1" stroke-dasharray="1 1"/></svg>
<svg class="b" style="left:944px;top:104px;" width="15" height="12" viewBox="0 0 15 12"><path d="M0.8 0.8H13.2L8.4 6.2V11L5.6 9.5V6.2Z" fill="#fff" stroke="#222" stroke-width="1.3" stroke-linejoin="round"/></svg>
<div class="b" style="left:0px;top:142px;width:1444px;height:24px;background:#abb2be;"></div>
<svg class="b" style="left:1px;top:142px;" width="150" height="24" viewBox="0 0 150 24"><defs><linearGradient id="tg" x1="0" y1="0" x2="0" y2="1"><stop offset="0" stop-color="#f1dcc0"/><stop offset="0.3" stop-color="#fbc888"/><stop offset="0.55" stop-color="#fda53e"/><stop offset="0.78" stop-color="#fcc888"/><stop offset="1" stop-color="#fdecd4"/></linearGradient></defs><path d="M1 24V6Q1 1 6 1H127Q133 1 136.5 7L146.5 24Z" fill="url(#tg)" stroke="#f0b878" stroke-width="1"/></svg>
<div class="t u" style="top:146.00px;line-height:17px;font-size:11px;color:#111;font-weight:bold;letter-spacing:-0.365px;left:31.4px;">Tabla de Empleados</div>
<svg class="b" style="left:8px;top:147px;" width="14" height="14" viewBox="0 0 14 14"><rect x="0.00" y="0.00" width="8.00" height="6.50" fill="#f00" /><rect x="8.00" y="0.00" width="6.00" height="8.00" fill="#0ff" /><rect x="6.00" y="8.00" width="8.00" height="6.00" fill="#0f0" /><rect x="0.00" y="6.50" width="6.00" height="7.50" fill="#ff0" /><rect x="4.00" y="4.00" width="5.50" height="5.50" fill="#fff" stroke="#b0b0b0" stroke-width="0.7"/></svg>
<svg class="b" style="left:1425px;top:148px;" width="12" height="12" viewBox="0 0 12 12"><path d="M2.5 2.2L9.5 9.2M9.5 2.2L2.5 9.2" stroke="#2a2a2a" stroke-width="1.5"/></svg>
<div class="b" style="left:0px;top:165px;width:1444px;height:1px;background:#7f8591;"></div>
<div class="b" style="left:0px;top:166px;width:1444px;height:1px;background:#fbfcfa;"></div>
<div class="b" style="left:0px;top:167px;width:1444px;height:635px;background:#e3efd3;"></div>
<div class="b" style="left:0px;top:802px;width:1444px;height:1px;background:#a3a7ae;"></div>
<div class="b" style="left:0px;top:803px;width:1444px;height:19px;background:linear-gradient(#f5f6f9 0%,#f2f3f6 48%,#e6e7eb 52%,#e4e5e9 100%);"></div>
<div class="t u" style="top:804.00px;line-height:17px;font-size:11px;color:#444;letter-spacing:0.076px;left:6.4px;">Record:</div>
<svg class="b" style="left:51.4px;top:807.5px;" width="8" height="9" viewBox="0 0 8 9"><path d="M1.2 0.5V8.5" stroke="#3a3d42" stroke-width="1.5"/><path d="M7 0.3L2.6 4.5L7 8.7Z" fill="#3a3d42"/></svg>
<svg class="b" style="left:69.4px;top:807.5px;" width="6" height="9" viewBox="0 0 6 9"><path d="M5.2 0.3L0.8 4.5L5.2 8.7Z" fill="#3a3d42"/></svg>
<div class="b" style="left:80px;top:804px;width:49px;height:16px;background:#fff;border:1px solid #e3e5e9;"></div>
<div class="t u" style="top:804.00px;line-height:17px;font-size:11px;color:#000;left:82.7px;">3 of 3</div>
<svg class="b" style="left:138.4px;top:807.5px;" width="6" height="9" viewBox="0 0 6 9"><path d="M0.8 0.3L5.2 4.5L0.8 8.7Z" fill="#3a3d42"/></svg>
<svg class="b" style="left:154.4px;top:807.5px;" width="8" height="9" viewBox="0 0 8 9"><path d="M1 0.3L5.4 4.5L1 8.7Z" fill="#3a3d42"/><path d="M6.8 0.5V8.5" stroke="#3a3d42" stroke-width="1.5"/></svg>
<svg class="b" style="left:168.4px;top:807.5px;" width="13" height="9" viewBox="0 0 13 9"><path d="M0.8 0.3L5.2 4.5L0.8 8.7Z" fill="#3a3d42"/><path d="M6 3.5h2v-2h2.5v2h2v2.5h-2v2h-2.5v-2h-2z" fill="#e9c440"/><path d="M6.2 0.8L12.2 7.8M12.2 0.8L6.2 7.8" stroke="#e9c440" stroke-width="0.9" stroke-dasharray="1.2 1.2"/></svg>
<div class="b" style="left:187px;top:803px;width:1px;height:18px;background:#c5c9cf;"></div>
<div class="b" style="left:188px;top:803px;width:1px;height:18px;background:#fdfdfe;"></div>
<svg class="b" style="left:196px;top:805px;" width="16" height="14" viewBox="0 0 16 14"><path d="M0.8 1.5H10.5L6.8 6V11.5L4.6 10.3V6Z" fill="#fff" stroke="#555" stroke-width="1"/><path d="M6.5 4.5L13.5 12.5M13.5 5.5L8 12.8" stroke="#e0281e" stroke-width="2"/></svg>
<div class="t u" style="top:804.00px;line-height:17px;font-size:11px;color:#444;letter-spacing:0.181px;left:214.4px;">Unfiltered</div>
<div class="b" style="left:274px;top:803px;width:1px;height:18px;background:#c5c9cf;"></div>
<div class="b" style="left:275px;top:803px;width:1px;height:18px;background:#fdfdfe;"></div>
<div class="b" style="left:281px;top:804px;width:69px;height:16px;background:#fff;border:1px solid #e3e5e9;"></div>
<div class="t u" style="top:804.00px;line-height:17px;font-size:11px;color:#000;left:283px;">Search</div>
<div class="b" style="left:12px;top:172px;width:130px;height:19px;border:1px solid #7b7b7b;"></div>
<div class="t a" style="top:172.00px;line-height:19px;font-size:13px;color:#000;letter-spacing:-0.42px;left:14.5px;">ID Empleado:</div>
<div class="b" style="left:141px;top:172px;width:143px;height:19px;background:#ffff82;border:1px solid #7b7b7b;"></div>
<div class="t a" style="top:172.00px;line-height:19px;font-size:13px;color:#000;letter-spacing:-0.3px;left:143.5px;">00003</div>
<div class="b" style="left:327px;top:173px;width:121px;height:19px;border:1px solid #7b7b7b;"></div>
<div class="t a" style="top:173.00px;line-height:19px;font-size:13px;color:#000;letter-spacing:-0.42px;left:329.5px;-webkit-text-stroke:0.25px #000;">Apellidos:</div>
<div class="b" style="left:447px;top:173px;width:282px;height:19px;background:#ffff82;border:1px solid #7b7b7b;"></div>
<div class="t a" style="top:173.00px;line-height:19px;font-size:13px;color:#000;letter-spacing:-0.3px;left:449.5px;">Canton Casado</div>
<div class="b" style="left:743px;top:173px;width:111px;height:19px;border:1px solid #7b7b7b;"></div>
<div class="t a" style="top:173.00px;line-height:19px;font-size:13px;color:#000;letter-spacing:-0.42px;left:745.5px;-webkit-text-stroke:0.25px #000;">Nombre:</div>
<div class="b" style="left:853px;top:173px;width:164px;height:19px;background:#ffff82;border:1px solid #7b7b7b;"></div>
<div class="t a" style="top:173.00px;line-height:19px;font-size:13px;color:#000;letter-spacing:-0.3px;left:855.5px;">Rubén</div>
<div class="b" style="left:1076px;top:173px;width:110px;height:19px;border:1px solid #7b7b7b;"></div>
<div class="t a" style="top:173.00px;line-height:19px;font-size:13px;color:#000;letter-spacing:-0.42px;left:1078.5px;-webkit-text-stroke:0.25px #000;">Usuario:</div>
<div class="b" style="left:1185px;top:173px;width:171px;height:19px;background:#ffff82;border:1px solid #7b7b7b;"></div>
<div class="b" style="left:1338px;top:174px;width:17px;height:17px;background:#e2e2e2;border:1px solid #adadad;"></div>
<svg class="b" style="left:1342px;top:180px;" width="10" height="6" viewBox="0 0 10 6"><path d="M1 1L5 5L9 1" stroke="#444" stroke-width="1.1" fill="none"/></svg>
<div class="b" style="left:12px;top:209px;width:609px;height:3px;background:#b9c6a8;"></div>
<div class="b" style="left:29px;top:201px;width:201px;height:19px;background:#b9c6a8;"></div>
<div class="t a" style="top:200.00px;line-height:19px;font-size:13px;color:#8b0a0a;font-weight:bold;letter-spacing:0.24px;left:-170.38px;width:600px;text-align:center;">Datos personales:</div>
<div class="b" style="left:29px;top:221px;width:192px;height:19px;border:1px solid #7b7b7b;"></div>
<div class="t a" style="top:221.00px;line-height:19px;font-size:13px;color:#000;letter-spacing:-0.42px;left:31.5px;-webkit-text-stroke:0.25px #000;">Fecha Nacimiento:</div>
<div class="b" style="left:220px;top:221px;width:126px;height:19px;background:#fff;border:1px solid #7b7b7b;"></div>
<div class="t a" style="top:221.00px;line-height:19px;font-size:13px;color:#000;letter-spacing:-0.3px;left:222.5px;">03/05/1995</div>
<div class="b" style="left:345px;top:221px;width:99px;height:19px;background:#bfbfbf;border:1px solid #7b7b7b;"></div>
<div class="t a" style="top:221.00px;line-height:19px;font-size:13px;color:#000;letter-spacing:-0.3px;left:94.35px;width:600px;text-align:center;">22 años</div>
<div class="b" style="left:29px;top:239px;width:192px;height:19px;border:1px solid #7b7b7b;"></div>
<div class="t a" style="top:239.00px;line-height:19px;font-size:13px;color:#000;letter-spacing:-0.42px;left:31.5px;">Lugar Nacimiento:</div>
<div class="b" style="left:220px;top:239px;width:389px;height:19px;background:#fff;border:1px solid #7b7b7b;"></div>
<div class="b" style="left:28px;top:260px;width:193px;height:19px;border:1px solid #7b7b7b;"></div>
<div class="t a" style="top:260.00px;line-height:19px;font-size:13px;color:#000;letter-spacing:-0.42px;left:30.5px;">NIF/CIF:</div>
<div class="b" style="left:220px;top:260px;width:328px;height:19px;background:#fff;border:1px solid #7b7b7b;"></div>
<div class="t a" style="top:260.00px;line-height:19px;font-size:13px;color:#000;letter-spacing:-0.3px;left:222.5px;">23165498-J</div>
<div class="b" style="left:28px;top:278px;width:193px;height:19px;border:1px solid #7b7b7b;"></div>
<div class="t a" style="top:278.00px;line-height:19px;font-size:13px;color:#000;letter-spacing:-0.42px;left:30.5px;">No Seguridad Social:</div>
<div class="b" style="left:220px;top:278px;width:273px;height:19px;background:#fff;border:1px solid #7b7b7b;"></div>
<div class="b" style="left:28px;top:296px;width:193px;height:19px;border:1px solid #7b7b7b;"></div>
<div class="t a" style="top:296.00px;line-height:19px;font-size:13px;color:#000;letter-spacing:-0.42px;left:30.5px;">Sexo:</div>
<div class="b" style="left:220px;top:296px;width:122px;height:19px;background:#fff;border:1px solid #7b7b7b;"></div>
<div class="t a" style="top:296.00px;line-height:19px;font-size:13px;color:#000;letter-spacing:-0.3px;left:222.5px;">Hombre</div>
<div class="b" style="left:324px;top:297px;width:17px;height:17px;background:#e2e2e2;border:1px solid #adadad;"></div>
<svg class="b" style="left:328px;top:303px;" width="10" height="6" viewBox="0 0 10 6"><path d="M1 1L5 5L9 1" stroke="#444" stroke-width="1.1" fill="none"/></svg>
<div class="b" style="left:12px;top:334px;width:609px;height:3px;background:#b9c6a8;"></div>
<div class="b" style="left:22px;top:326px;width:213px;height:19px;background:#b9c6a8;"></div>
<div class="t a" style="top:325.00px;line-height:19px;font-size:13px;color:#8b0a0a;font-weight:bold;letter-spacing:0.24px;left:-171.38px;width:600px;text-align:center;">Datos de contacto:</div>
<div class="b" style="left:30px;top:347px;width:120px;height:19px;border:1px solid #7b7b7b;"></div>
<div class="t a" style="top:347.00px;line-height:19px;font-size:13px;color:#000;letter-spacing:-0.42px;left:32.5px;">Dirección:</div>
<div class="b" style="left:149px;top:347px;width:464px;height:19px;background:#fff;border:1px solid #7b7b7b;"></div>
<div class="b" style="left:30px;top:365px;width:120px;height:19px;border:1px solid #7b7b7b;"></div>
<div class="t a" style="top:365.00px;line-height:19px;font-size:13px;color:#000;letter-spacing:-0.42px;left:32.5px;-webkit-text-stroke:0.25px #000;">Cód. Postal:</div>
<div class="b" style="left:149px;top:365px;width:144px;height:19px;background:#fff;border:1px solid #7b7b7b;"></div>
<div class="t a" style="top:365.00px;line-height:19px;font-size:13px;color:#000;letter-spacing:-0.3px;left:151.5px;">33770</div>
<div class="b" style="left:30px;top:383px;width:120px;height:19px;border:1px solid #7b7b7b;"></div>
<div class="t a" style="top:383.00px;line-height:19px;font-size:13px;color:#000;letter-spacing:-0.42px;left:32.5px;">Localidad:</div>
<div class="b" style="left:149px;top:383px;width:411px;height:19px;background:#fff;border:1px solid #7b7b7b;"></div>
<div class="t a" style="top:383.00px;line-height:19px;font-size:13px;color:#000;letter-spacing:-0.3px;left:151.5px;">Vegadeo</div>
<div class="b" style="left:30px;top:401px;width:120px;height:19px;border:1px solid #7b7b7b;"></div>
<div class="t a" style="top:401.00px;line-height:19px;font-size:13px;color:#000;letter-spacing:-0.42px;left:32.5px;">Provincia:</div>
<div class="b" style="left:149px;top:401px;width:331px;height:19px;background:#fff;border:1px solid #7b7b7b;"></div>
<div class="t a" style="top:401.00px;line-height:19px;font-size:13px;color:#000;letter-spacing:-0.3px;left:151.5px;">Asturias</div>
<div class="b" style="left:30px;top:422px;width:120px;height:19px;border:1px solid #7b7b7b;"></div>
<div class="t a" style="top:422.00px;line-height:19px;font-size:13px;color:#000;letter-spacing:-0.42px;left:32.5px;-webkit-text-stroke:0.25px #000;">Teléfono:</div>
<div class="b" style="left:149px;top:422px;width:461px;height:19px;background:#fff;border:1px solid #7b7b7b;"></div>
<div class="b" style="left:30px;top:440px;width:120px;height:19px;border:1px solid #7b7b7b;"></div>
<div class="t a" style="top:440.00px;line-height:19px;font-size:13px;color:#000;letter-spacing:-0.42px;left:32.5px;">Móvil:</div>
<div class="b" style="left:149px;top:440px;width:461px;height:19px;background:#fff;border:1px solid #7b7b7b;"></div>
<div class="b" style="left:30px;top:461px;width:120px;height:19px;border:1px solid #7b7b7b;"></div>
<div class="t a" style="top:461.00px;line-height:19px;font-size:13px;color:#000;letter-spacing:-0.42px;left:32.5px;-webkit-text-stroke:0.25px #000;">E-Mail:</div>
<div class="b" style="left:149px;top:461px;width:408px;height:19px;background:#fff;border:1px solid #7b7b7b;"></div>
<div class="b" style="left:558px;top:461px;width:52px;height:21px;background:#f0f0f0;border-top:1px solid #fff;border-left:1px solid #fff;border-right:1px solid #696969;border-bottom:1px solid #696969;box-shadow:inset -1px -1px 0 #a0a0a0;"></div>
<svg class="b" style="left:576px;top:465px;" width="16" height="11" viewBox="0 0 16 11"><rect x="0.6" y="0.6" width="14.3" height="9.3" fill="#fff" stroke="#000" stroke-width="1.2"/><path d="M2.3 2.5H6M5.2 5.3H10.8M5.2 7.4H9.8" stroke="#000" stroke-width="0.9" fill="none"/><rect x="11.2" y="2" width="1.8" height="1.8" fill="#8b0000"/></svg>
<div class="b" style="left:640px;top:209px;width:732px;height:3px;background:#b9c6a8;"></div>
<div class="b" style="left:658px;top:201px;width:183px;height:19px;background:#b9c6a8;"></div>
<div class="t a" style="top:200.00px;line-height:19px;font-size:13px;color:#8b0a0a;font-weight:bold;letter-spacing:0.24px;left:449.62px;width:600px;text-align:center;">Datos laborales:</div>
<div class="b" style="left:657px;top:221px;width:224px;height:19px;border:1px solid #7b7b7b;"></div>
<div class="t a" style="top:221.00px;line-height:19px;font-size:13px;color:#000;letter-spacing:-0.42px;left:659.5px;-webkit-text-stroke:0.25px #000;">Num. Contrato:</div>
<div class="b" style="left:880px;top:221px;width:226px;height:19px;background:#fff;border:1px solid #7b7b7b;"></div>
<div class="b" style="left:657px;top:239px;width:224px;height:19px;border:1px solid #7b7b7b;"></div>
<div class="t a" style="top:239.00px;line-height:19px;font-size:13px;color:#000;letter-spacing:-0.42px;left:659.5px;">Tipo Contrato:</div>
<div class="b" style="left:880px;top:239px;width:332px;height:19px;background:#fff;border:1px solid #7b7b7b;"></div>
<div class="b" style="left:657px;top:257px;width:224px;height:19px;border:1px solid #7b7b7b;"></div>
<div class="t a" style="top:257.00px;line-height:19px;font-size:13px;color:#000;letter-spacing:-0.42px;left:659.5px;-webkit-text-stroke:0.25px #000;">Puesto:</div>
<div class="b" style="left:880px;top:257px;width:480px;height:19px;background:#fff;border:1px solid #7b7b7b;"></div>
<div class="b" style="left:657px;top:278px;width:224px;height:19px;border:1px solid #7b7b7b;"></div>
<div class="t a" style="top:278.00px;line-height:19px;font-size:13px;color:#000;letter-spacing:-0.42px;left:659.5px;-webkit-text-stroke:0.25px #000;">Fecha Contratación:</div>
<div class="b" style="left:880px;top:278px;width:180px;height:19px;background:#fff;border:1px solid #7b7b7b;"></div>
<div class="t a" style="top:278.00px;line-height:19px;font-size:13px;color:#000;letter-spacing:-0.3px;left:882.5px;">04/07/2016</div>
<div class="b" style="left:657px;top:296px;width:224px;height:19px;border:1px solid #7b7b7b;"></div>
<div class="t a" style="top:296.00px;line-height:19px;font-size:13px;color:#000;letter-spacing:-0.42px;left:659.5px;">Fecha Fin Contrato:</div>
<div class="b" style="left:880px;top:296px;width:180px;height:19px;background:#fff;border:1px solid #7b7b7b;"></div>
<div class="b" style="left:1098px;top:296px;width:83px;height:19px;border:1px solid #7b7b7b;"></div>
<div class="t a" style="top:296.00px;line-height:19px;font-size:13px;color:#000;letter-spacing:-0.42px;left:1100.5px;-webkit-text-stroke:0.25px #000;">Aviso:</div>
<div class="b" style="left:1180px;top:296px;width:180px;height:19px;background:#fff;border:1px solid #7b7b7b;"></div>
<div class="b" style="left:640px;top:334px;width:732px;height:3px;background:#b9c6a8;"></div>
<div class="b" style="left:657px;top:326px;width:213px;height:19px;background:#b9c6a8;"></div>
<div class="t a" style="top:325.00px;line-height:19px;font-size:13px;color:#8b0a0a;font-weight:bold;letter-spacing:0.24px;left:463.62px;width:600px;text-align:center;">Datos económicos:</div>
<div class="b" style="left:880px;top:341px;width:120px;height:19px;border:1px solid #7b7b7b;"></div>
<div class="t a" style="top:341.00px;line-height:19px;font-size:13px;color:#000;letter-spacing:-0.3px;left:639.85px;width:600px;text-align:center;">Ordinaria</div>
<div class="b" style="left:880px;top:359px;width:120px;height:19px;background:#fff;border:1px solid #7b7b7b;"></div>
<div class="t a" style="top:359.00px;line-height:19px;font-size:13px;color:#000;letter-spacing:-0.3px;left:639.85px;width:600px;text-align:center;">20,00</div>
<div class="b" style="left:880px;top:377px;width:120px;height:19px;background:#fff;border:1px solid #7b7b7b;"></div>
<div class="t a" style="top:377.00px;line-height:19px;font-size:13px;color:#000;letter-spacing:-0.3px;left:639.85px;width:600px;text-align:center;">30,00</div>
<div class="b" style="left:1003px;top:341px;width:121px;height:19px;border:1px solid #7b7b7b;"></div>
<div class="t a" style="top:341.00px;line-height:19px;font-size:13px;color:#000;letter-spacing:-0.3px;left:763.35px;width:600px;text-align:center;">HE Normal</div>
<div class="b" style="left:1003px;top:359px;width:121px;height:19px;background:#fff;border:1px solid #7b7b7b;"></div>
<div class="t a" style="top:359.00px;line-height:19px;font-size:13px;color:#000;letter-spacing:-0.3px;left:763.35px;width:600px;text-align:center;">25,00</div>
<div class="b" style="left:1003px;top:377px;width:121px;height:19px;background:#fff;border:1px solid #7b7b7b;"></div>
<div class="t a" style="top:377.00px;line-height:19px;font-size:13px;color:#000;letter-spacing:-0.3px;left:763.35px;width:600px;text-align:center;">35,00</div>
<div class="b" style="left:1123px;top:341px;width:120px;height:19px;border:1px solid #7b7b7b;"></div>
<div class="t a" style="top:341.00px;line-height:19px;font-size:13px;color:#000;letter-spacing:-0.3px;left:882.85px;width:600px;text-align:center;">HE Nocturna</div>
<div class="b" style="left:1123px;top:359px;width:120px;height:19px;background:#fff;border:1px solid #7b7b7b;"></div>
<div class="t a" style="top:359.00px;line-height:19px;font-size:13px;color:#000;letter-spacing:-0.3px;left:882.85px;width:600px;text-align:center;">30,00</div>
<div class="b" style="left:1123px;top:377px;width:120px;height:19px;background:#fff;border:1px solid #7b7b7b;"></div>
<div class="t a" style="top:377.00px;line-height:19px;font-size:13px;color:#000;letter-spacing:-0.3px;left:882.85px;width:600px;text-align:center;">40,00</div>
<div class="b" style="left:1242px;top:341px;width:121px;height:19px;border:1px solid #7b7b7b;"></div>
<div class="t a" style="top:341.00px;line-height:19px;font-size:13px;color:#000;letter-spacing:-0.3px;left:1002.35px;width:600px;text-align:center;">HE Festiva</div>
<div class="b" style="left:1242px;top:359px;width:121px;height:19px;background:#fff;border:1px solid #7b7b7b;"></div>
<div class="t a" style="top:359.00px;line-height:19px;font-size:13px;color:#000;letter-spacing:-0.3px;left:1002.35px;width:600px;text-align:center;">30,00</div>
<div class="b" style="left:1242px;top:377px;width:121px;height:19px;background:#fff;border:1px solid #7b7b7b;"></div>
<div class="t a" style="top:377.00px;line-height:19px;font-size:13px;color:#000;letter-spacing:-0.3px;left:1002.35px;width:600px;text-align:center;">40,00</div>
<div class="b" style="left:657px;top:359px;width:224px;height:19px;border:1px solid #7b7b7b;"></div>
<div class="t a" style="top:359.00px;line-height:19px;font-size:13px;color:#000;letter-spacing:-0.42px;left:659.5px;">Precio coste/hora:</div>
<div class="b" style="left:657px;top:377px;width:224px;height:19px;border:1px solid #7b7b7b;"></div>
<div class="t a" style="top:377.00px;line-height:19px;font-size:13px;color:#000;letter-spacing:-0.42px;left:659.5px;-webkit-text-stroke:0.25px #000;">Precio facturación/hora:</div>
<div class="b" style="left:657px;top:400px;width:224px;height:19px;border:1px solid #7b7b7b;"></div>
<div class="t a" style="top:400.00px;line-height:19px;font-size:13px;color:#000;letter-spacing:-0.42px;left:659.5px;-webkit-text-stroke:0.25px #000;">Divisa:</div>
<div class="b" style="left:880px;top:400px;width:254px;height:19px;background:#fff;border:1px solid #7b7b7b;"></div>
<div class="t a" style="top:400.00px;line-height:19px;font-size:13px;color:#000;letter-spacing:-0.3px;left:882.5px;">Euro</div>
<div class="b" style="left:1116px;top:401px;width:17px;height:17px;background:#e2e2e2;border:1px solid #adadad;"></div>
<svg class="b" style="left:1120px;top:407px;" width="10" height="6" viewBox="0 0 10 6"><path d="M1 1L5 5L9 1" stroke="#444" stroke-width="1.1" fill="none"/></svg>
<div class="b" style="left:1146px;top:400px;width:127px;height:19px;border:1px solid #7b7b7b;"></div>
<div class="t a" style="top:400.00px;line-height:19px;font-size:13px;color:#000;letter-spacing:-0.42px;left:1148.5px;-webkit-text-stroke:0.25px #000;">% Comisión:</div>
<div class="b" style="left:1272px;top:400px;width:91px;height:19px;background:#fff;border:1px solid #7b7b7b;"></div>
<div class="t a" style="top:400.00px;line-height:19px;font-size:13px;color:#000;letter-spacing:-0.3px;left:1017.35px;width:600px;text-align:center;">5,00</div>
<div class="b" style="left:657px;top:421px;width:224px;height:19px;border:1px solid #7b7b7b;"></div>
<div class="t a" style="top:421.00px;line-height:19px;font-size:13px;color:#000;letter-spacing:-0.42px;left:659.5px;-webkit-text-stroke:0.25px #000;">Suma de anticipos:</div>
<div class="b" style="left:880px;top:421px;width:136px;height:19px;background:#bfbfbf;border:1px solid #7b7b7b;"></div>
<div class="t a" style="top:421.00px;line-height:19px;font-size:13px;color:#000;letter-spacing:-0.3px;left:882.5px;">0,00</div>
<div class="b" style="left:1017px;top:421px;width:51px;height:21px;background:#f0f0f0;border-top:1px solid #fff;border-left:1px solid #fff;border-right:1px solid #696969;border-bottom:1px solid #696969;box-shadow:inset -1px -1px 0 #a0a0a0;"></div>
<svg class="b" style="left:1031px;top:425px;" width="21" height="11" viewBox="0 0 21 11"><rect x="0" y="0" width="21" height="11" fill="#c0c0c0"/><path d="M1 5.5H10M5.5 1V10" stroke="#0000f0" stroke-width="3"/><path d="M14.2 9.2L17.5 2L19.6 3L16.2 10L14 10.8Z" fill="#f0e020" stroke="#000" stroke-width="1"/><path d="M17.5 2L18.2 0.8L20.2 1.6L19.6 3Z" fill="#a00000" stroke="#000" stroke-width="0.6"/><path d="M8.5 10.5H13.5" stroke="#000" stroke-width="1" stroke-dasharray="1 1"/></svg>
<div class="b" style="left:1109px;top:421px;width:123px;height:19px;border:1px solid #7b7b7b;"></div>
<div class="t a" style="top:421.00px;line-height:19px;font-size:13px;color:#000;letter-spacing:-0.42px;left:1111.5px;-webkit-text-stroke:0.25px #000;">Contabilidad:</div>
<div class="b" style="left:1231px;top:421px;width:132px;height:19px;background:#fff;border:1px solid #7b7b7b;"></div>
<div class="b" style="left:640px;top:451px;width:732px;height:3px;background:#b9c6a8;"></div>
<div class="b" style="left:640px;top:463px;width:77px;height:19px;border:1px solid #7b7b7b;"></div>
<div class="t a" style="top:463.00px;line-height:19px;font-size:13px;color:#000;letter-spacing:-0.42px;left:642.5px;-webkit-text-stroke:0.25px #000;">F. Alta:</div>
<div class="b" style="left:716px;top:463px;width:143px;height:19px;background:#fff;border:1px solid #7b7b7b;"></div>
<div class="t a" style="top:463.00px;line-height:19px;font-size:13px;color:#000;letter-spacing:-0.3px;left:718.5px;">04/07/2016</div>
<div class="b" style="left:640px;top:481px;width:77px;height:19px;border:1px solid #7b7b7b;"></div>
<div class="t a" style="top:481.00px;line-height:19px;font-size:13px;color:#000;letter-spacing:-0.42px;left:642.5px;">Foto:</div>
<div class="b" style="left:716px;top:481px;width:335px;height:19px;background:#fff;border:1px solid #7b7b7b;"></div>
<div class="b" style="left:1051px;top:481px;width:50px;height:21px;background:#f0f0f0;border-top:1px solid #fff;border-left:1px solid #fff;border-right:1px solid #696969;border-bottom:1px solid #696969;box-shadow:inset -1px -1px 0 #a0a0a0;"></div>
<svg class="b" style="left:1068px;top:489px;" width="16" height="5" viewBox="0 0 16 5"><rect x="1" y="1" width="3" height="3.2" fill="#000"/><rect x="6" y="1" width="3" height="3.2" fill="#000"/><rect x="11" y="1" width="3" height="3.2" fill="#000"/></svg>
<div class="b" style="left:1101px;top:481px;width:52px;height:21px;background:#f0f0f0;border-top:1px solid #fff;border-left:1px solid #fff;border-right:1px solid #696969;border-bottom:1px solid #696969;box-shadow:inset -1px -1px 0 #a0a0a0;"></div>
<svg class="b" style="left:1118px;top:484px;" width="19" height="13" viewBox="0 0 19 13"><circle cx="4" cy="9" r="2.6" fill="#30e0f0" stroke="#000" stroke-width="1"/><circle cx="10.8" cy="9" r="2.6" fill="#30e0f0" stroke="#000" stroke-width="1"/><path d="M1.5 8Q2 3.5 5.2 1.2L6.5 2.5M8.3 8Q9.5 4 15.5 1.8L17 4.5M6.6 8.6Q7.4 7.8 8.2 8.6" fill="none" stroke="#000" stroke-width="0.9"/></svg>
<div class="b" style="left:1168px;top:460px;width:195px;height:19px;border:1px solid #7b7b7b;"></div>
<div class="t a" style="top:460.00px;line-height:19px;font-size:13px;color:#000;letter-spacing:-0.42px;left:1170.5px;">Campos libres:</div>
<div class="b" style="left:1168px;top:478px;width:195px;height:19px;background:#fff;border:1px solid #7b7b7b;"></div>
<div class="b" style="left:1168px;top:496px;width:195px;height:19px;background:#fff;border:1px solid #7b7b7b;"></div>
<div class="b" style="left:1168px;top:514px;width:195px;height:19px;background:#fff;border:1px solid #7b7b7b;"></div>
<div class="t a" style="top:501.00px;line-height:19px;font-size:13px;color:#7d0000;font-weight:bold;letter-spacing:0.051px;left:13.5px;-webkit-text-stroke:0.35px #7d0000;">Incidencias:</div>
<div class="t a" style="top:519.00px;line-height:19px;font-size:13px;color:#7d0000;font-weight:bold;letter-spacing:0.1px;left:931px;-webkit-text-stroke:0.35px #7d0000;">Comentarios:</div>
<div class="b" style="left:930px;top:539px;width:433px;height:244px;background:#fff;border:1px solid #7b7b7b;"></div>
<div class="b" style="left:12px;top:520px;width:903px;height:263px;background:#fff;border:1px solid #8a8a8a;"></div>
<div class="b" style="left:13px;top:521px;width:658px;height:17px;background:#dfe2e7;"></div>
<div class="b" style="left:671px;top:521px;width:243px;height:17px;background:#f7f8fd;"></div>
<div class="b" style="left:13px;top:538px;width:18px;height:225px;background:#f4f5fb;"></div>
<div class="b" style="left:13px;top:538px;width:18px;height:16px;background:#e6e8ec;"></div>
<div class="b" style="left:125px;top:538px;width:546px;height:16px;background:#a6cff1;"></div>
<div class="b" style="left:13px;top:554px;width:658px;height:1px;background:#8a8a8a;"></div>
<div class="b" style="left:671px;top:554px;width:243px;height:1px;background:#d9dade;"></div>
<div class="b" style="left:13px;top:571px;width:901px;height:1px;background:#d9dade;"></div>
<div class="b" style="left:13px;top:588px;width:901px;height:1px;background:#d9dade;"></div>
<div class="b" style="left:13px;top:605px;width:901px;height:1px;background:#d9dade;"></div>
<div class="b" style="left:13px;top:622px;width:901px;height:1px;background:#d9dade;"></div>
<div class="b" style="left:13px;top:639px;width:901px;height:1px;background:#d9dade;"></div>
<div class="b" style="left:13px;top:656px;width:901px;height:1px;background:#d9dade;"></div>
<div class="b" style="left:13px;top:673px;width:901px;height:1px;background:#d9dade;"></div>
<div class="b" style="left:13px;top:690px;width:901px;height:1px;background:#d9dade;"></div>
<div class="b" style="left:13px;top:707px;width:901px;height:1px;background:#d9dade;"></div>
<div class="b" style="left:13px;top:724px;width:901px;height:1px;background:#d9dade;"></div>
<div class="b" style="left:13px;top:741px;width:901px;height:1px;background:#d9dade;"></div>
<div class="b" style="left:13px;top:758px;width:901px;height:1px;background:#d9dade;"></div>
<div class="b" style="left:13px;top:537px;width:658px;height:1px;background:#a9adb5;"></div>
<div class="b" style="left:671px;top:537px;width:243px;height:1px;background:#d9dade;"></div>
<div class="b" style="left:31px;top:538px;width:1px;height:16px;background:#8a8a8a;"></div>
<div class="b" style="left:31px;top:555px;width:1px;height:208px;background:#d9dade;"></div>
<div class="b" style="left:125px;top:521px;width:1px;height:17px;background:#a3a7af;"></div>
<div class="b" style="left:126px;top:521px;width:1px;height:16px;background:#f2f3f6;"></div>
<div class="b" style="left:125px;top:538px;width:1px;height:16px;background:#8a8a8a;"></div>
<div class="b" style="left:125px;top:555px;width:1px;height:208px;background:#d9dade;"></div>
<div class="b" style="left:191px;top:521px;width:1px;height:17px;background:#a3a7af;"></div>
<div class="b" style="left:192px;top:521px;width:1px;height:16px;background:#f2f3f6;"></div>
<div class="b" style="left:191px;top:538px;width:1px;height:16px;background:#8a8a8a;"></div>
<div class="b" style="left:191px;top:555px;width:1px;height:208px;background:#d9dade;"></div>
<div class="b" style="left:263px;top:521px;width:1px;height:17px;background:#a3a7af;"></div>
<div class="b" style="left:264px;top:521px;width:1px;height:16px;background:#f2f3f6;"></div>
<div class="b" style="left:263px;top:538px;width:1px;height:16px;background:#8a8a8a;"></div>
<div class="b" style="left:263px;top:555px;width:1px;height:208px;background:#d9dade;"></div>
<div class="b" style="left:327px;top:521px;width:1px;height:17px;background:#a3a7af;"></div>
<div class="b" style="left:328px;top:521px;width:1px;height:16px;background:#f2f3f6;"></div>
<div class="b" style="left:327px;top:538px;width:1px;height:16px;background:#8a8a8a;"></div>
<div class="b" style="left:327px;top:555px;width:1px;height:208px;background:#d9dade;"></div>
<div class="b" style="left:396px;top:521px;width:1px;height:17px;background:#a3a7af;"></div>
<div class="b" style="left:397px;top:521px;width:1px;height:16px;background:#f2f3f6;"></div>
<div class="b" style="left:396px;top:538px;width:1px;height:16px;background:#8a8a8a;"></div>
<div class="b" style="left:396px;top:555px;width:1px;height:208px;background:#d9dade;"></div>
<div class="b" style="left:490px;top:521px;width:1px;height:17px;background:#a3a7af;"></div>
<div class="b" style="left:491px;top:521px;width:1px;height:16px;background:#f2f3f6;"></div>
<div class="b" style="left:490px;top:538px;width:1px;height:16px;background:#8a8a8a;"></div>
<div class="b" style="left:490px;top:555px;width:1px;height:208px;background:#d9dade;"></div>
<div class="b" style="left:670px;top:521px;width:1px;height:17px;background:#a3a7af;"></div>
<div class="b" style="left:671px;top:521px;width:1px;height:16px;background:#f2f3f6;"></div>
<div class="b" style="left:670px;top:538px;width:1px;height:16px;background:#8a8a8a;"></div>
<div class="b" style="left:670px;top:555px;width:1px;height:208px;background:#d9dade;"></div>
<div class="b" style="left:858px;top:521px;width:1px;height:242px;background:#d9dade;"></div>
<div class="b" style="left:764px;top:521px;width:1px;height:242px;background:#d9dade;"></div>
<div class="t a" style="left:32px;top:521px;width:77px;height:17px;line-height:17px;font-size:13px;color:#333;text-align:center;overflow:hidden;letter-spacing:-0.34px;">Incidencia</div>
<svg class="b" style="left:113px;top:529px;" width="6" height="4" viewBox="0 0 6 4"><path d="M0.3 0.3H5.7L3 3.3Z" fill="#2a2a2a"/></svg>
<div class="t a" style="left:129px;top:521px;width:45.5px;height:17px;line-height:17px;font-size:13px;color:#333;overflow:hidden;letter-spacing:-0.34px;">Día desde</div>
<svg class="b" style="left:179px;top:529px;" width="6" height="4" viewBox="0 0 6 4"><path d="M0.3 0.3H5.7L3 3.3Z" fill="#2a2a2a"/></svg>
<div class="t a" style="left:195px;top:521px;width:51.5px;height:17px;line-height:17px;font-size:13px;color:#333;overflow:hidden;letter-spacing:-0.34px;">Hora desde</div>
<svg class="b" style="left:251px;top:529px;" width="6" height="4" viewBox="0 0 6 4"><path d="M0.3 0.3H5.7L3 3.3Z" fill="#2a2a2a"/></svg>
<div class="t a" style="left:267px;top:521px;width:43.5px;height:17px;line-height:17px;font-size:13px;color:#333;overflow:hidden;letter-spacing:-0.34px;">Día hasta</div>
<svg class="b" style="left:315px;top:529px;" width="6" height="4" viewBox="0 0 6 4"><path d="M0.3 0.3H5.7L3 3.3Z" fill="#2a2a2a"/></svg>
<div class="t a" style="left:331px;top:521px;width:48.5px;height:17px;line-height:17px;font-size:13px;color:#333;overflow:hidden;letter-spacing:-0.34px;">Hora hasta</div>
<svg class="b" style="left:384px;top:529px;" width="6" height="4" viewBox="0 0 6 4"><path d="M0.3 0.3H5.7L3 3.3Z" fill="#2a2a2a"/></svg>
<div class="t a" style="left:397px;top:521px;width:77px;height:17px;line-height:17px;font-size:13px;color:#333;text-align:center;overflow:hidden;letter-spacing:-0.34px;">Tiempo</div>
<svg class="b" style="left:478px;top:529px;" width="6" height="4" viewBox="0 0 6 4"><path d="M0.3 0.3H5.7L3 3.3Z" fill="#2a2a2a"/></svg>
<div class="t a" style="left:491px;top:521px;width:163px;height:17px;line-height:17px;font-size:13px;color:#333;text-align:center;overflow:hidden;letter-spacing:-0.34px;">Comentarios</div>
<svg class="b" style="left:658px;top:529px;" width="6" height="4" viewBox="0 0 6 4"><path d="M0.3 0.3H5.7L3 3.3Z" fill="#2a2a2a"/></svg>
<svg class="b" style="left:16px;top:523px;" width="12" height="12" viewBox="0 0 12 12"><path d="M11.5 0.5V11.5H0.5Z" fill="#eef0f5"/><path d="M11.5 0.5L0.5 11.5" stroke="#c3d0e4" stroke-width="0.9"/></svg>
<div class="t u" style="top:536.00px;line-height:20px;font-size:14px;color:#000;font-weight:bold;left:-277.50px;width:600px;text-align:center;">✳</div>
<div class="b" style="left:13px;top:763px;width:901px;height:1px;background:#8a8a8a;"></div>
<div class="b" style="left:13px;top:764px;width:901px;height:18px;background:linear-gradient(#f5f6f9 0%,#f2f3f6 48%,#e6e7eb 52%,#e4e5e9 100%);"></div>
<div class="t u" style="top:765.00px;line-height:17px;font-size:11px;color:#444;letter-spacing:0.076px;left:18.3px;">Record:</div>
<svg class="b" style="left:63.3px;top:768.5px;" width="8" height="9" viewBox="0 0 8 9"><path d="M1.2 0.5V8.5" stroke="#3a3d42" stroke-width="1.5"/><path d="M7 0.3L2.6 4.5L7 8.7Z" fill="#3a3d42"/></svg>
<svg class="b" style="left:81.3px;top:768.5px;" width="6" height="9" viewBox="0 0 6 9"><path d="M5.2 0.3L0.8 4.5L5.2 8.7Z" fill="#b9bdc3"/></svg>
<div class="b" style="left:92px;top:765px;width:49px;height:16px;background:#fff;border:1px solid #e3e5e9;"></div>
<div class="t u" style="top:765.00px;line-height:17px;font-size:11px;color:#000;left:94.6px;">1 of 1</div>
<svg class="b" style="left:150.3px;top:768.5px;" width="6" height="9" viewBox="0 0 6 9"><path d="M0.8 0.3L5.2 4.5L0.8 8.7Z" fill="#b9bdc3"/></svg>
<svg class="b" style="left:166.3px;top:768.5px;" width="8" height="9" viewBox="0 0 8 9"><path d="M1 0.3L5.4 4.5L1 8.7Z" fill="#3a3d42"/><path d="M6.8 0.5V8.5" stroke="#3a3d42" stroke-width="1.5"/></svg>
<svg class="b" style="left:180.3px;top:768.5px;" width="13" height="9" viewBox="0 0 13 9"><path d="M0.8 0.3L5.2 4.5L0.8 8.7Z" fill="#b9bdc3"/><path d="M6 3.5h2v-2h2.5v2h2v2.5h-2v2h-2.5v-2h-2z" fill="#f1e2a8"/><path d="M6.2 0.8L12.2 7.8M12.2 0.8L6.2 7.8" stroke="#f1e2a8" stroke-width="0.9" stroke-dasharray="1.2 1.2"/></svg>
<div class="b" style="left:199px;top:764px;width:1px;height:18px;background:#c5c9cf;"></div>
<div class="b" style="left:200px;top:764px;width:1px;height:18px;background:#fdfdfe;"></div>
<svg class="b" style="left:208px;top:766px;" width="16" height="14" viewBox="0 0 16 14"><path d="M0.8 1.5H10.5L6.8 6V11.5L4.6 10.3V6Z" fill="#fff" stroke="#a9adb3" stroke-width="1"/><path d="M6.5 4.5L13.5 12.5M13.5 5.5L8 12.8" stroke="#b9bcc2" stroke-width="2"/></svg>
<div class="t u" style="top:765.00px;line-height:17px;font-size:11px;color:#a3a7ad;letter-spacing:0.274px;left:226.3px;">No Filter</div>
<div class="b" style="left:278px;top:764px;width:1px;height:18px;background:#c5c9cf;"></div>
<div class="b" style="left:279px;top:764px;width:1px;height:18px;background:#fdfdfe;"></div>
<div class="b" style="left:285px;top:765px;width:69px;height:16px;background:#fff;border:1px solid #e3e5e9;"></div>
<div class="t u" style="top:765.00px;line-height:17px;font-size:11px;color:#000;left:287px;">Search</div>
<div class="b" style="left:1px;top:53px;width:1px;height:768px;background:rgba(255,255,255,0.85);"></div>
<div class="b" style="left:1442px;top:53px;width:1px;height:768px;background:rgba(255,255,255,0.6);"></div>
<div class="b" style="left:0px;top:0px;width:1444px;height:1px;background:#1883d7;"></div>
<div class="b" style="left:0px;top:0px;width:1px;height:822px;background:#1883d7;"></div>
<div class="b" style="left:1443px;top:0px;width:1px;height:822px;background:#1883d7;"></div>
<div class="b" style="left:0px;top:821px;width:1444px;height:1px;background:#1883d7;"></div>
<div class="b" style="left:0px;top:820px;width:1444px;height:1px;background:rgba(24,131,215,0.3);"></div>
</body></html>
